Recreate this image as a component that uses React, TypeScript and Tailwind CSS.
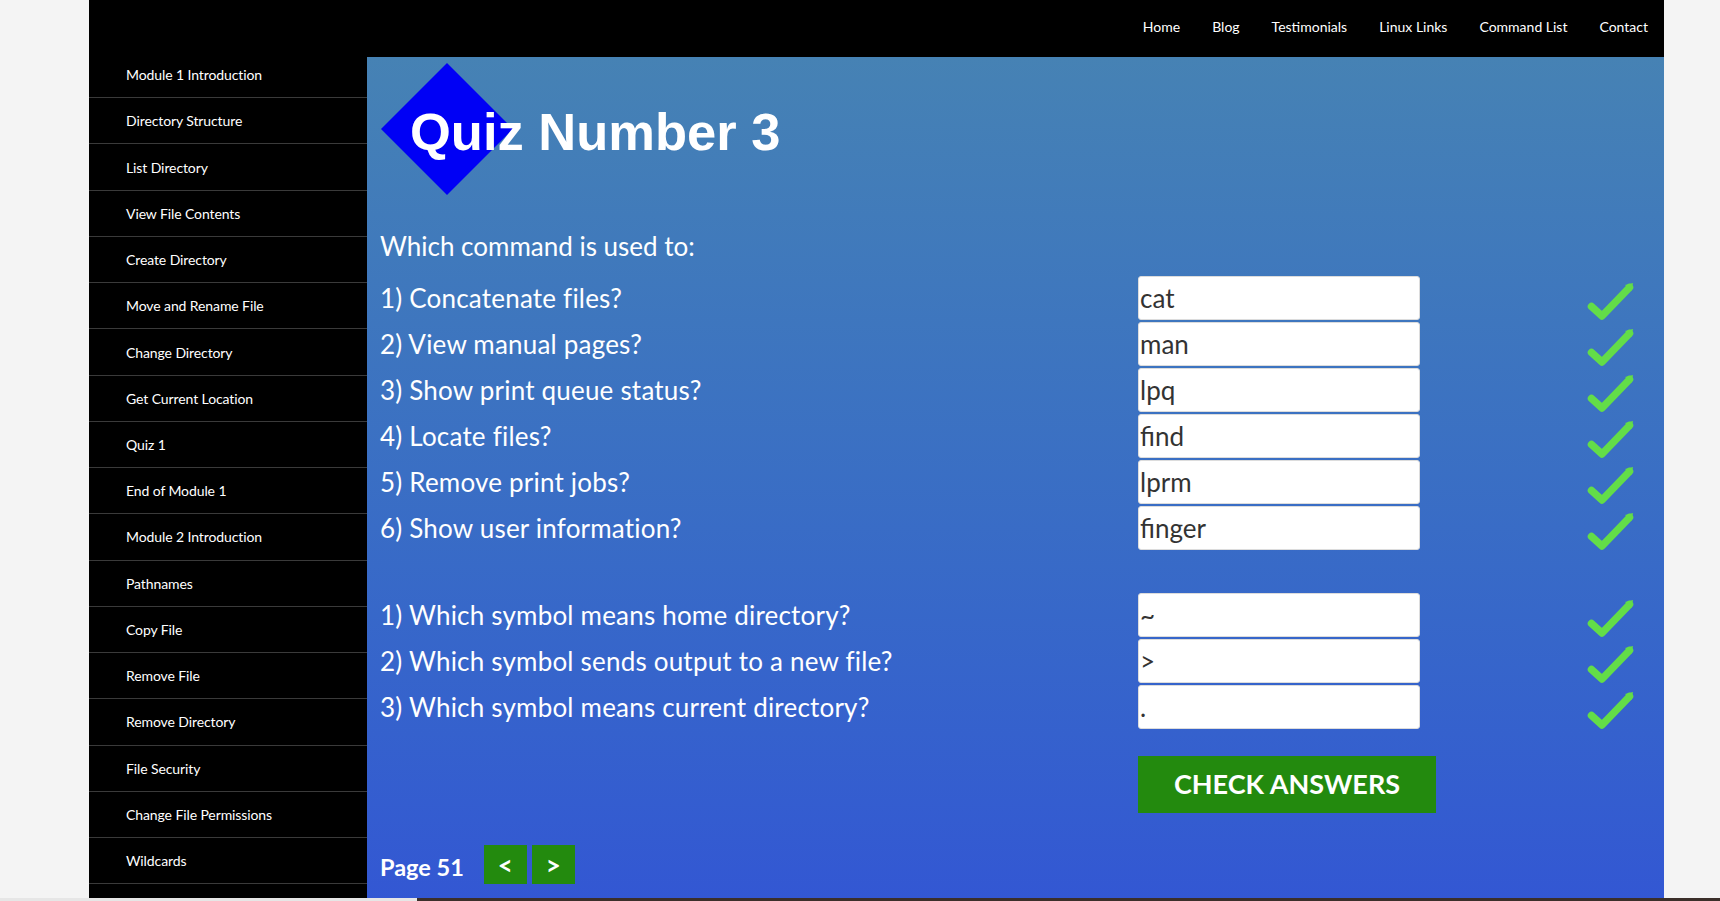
import React from "react";

const sideItems = [
  "Module 1 Introduction",
  "Directory Structure",
  "List Directory",
  "View File Contents",
  "Create Directory",
  "Move and Rename File",
  "Change Directory",
  "Get Current Location",
  "Quiz 1",
  "End of Module 1",
  "Module 2 Introduction",
  "Pathnames",
  "Copy File",
  "Remove File",
  "Remove Directory",
  "File Security",
  "Change File Permissions",
  "Wildcards",
];

const navItems = ["Home", "Blog", "Testimonials", "Linux Links", "Command List", "Contact"];

const group1 = [
  ["1) Concatenate files?", "cat"],
  ["2) View manual pages?", "man"],
  ["3) Show print queue status?", "lpq"],
  ["4) Locate files?", "find"],
  ["5) Remove print jobs?", "lprm"],
  ["6) Show user information?", "finger"],
];

const group2 = [
  ["1) Which symbol means home directory?", "~"],
  ["2) Which symbol sends output to a new file?", ">"],
  ["3) Which symbol means current directory?", "."],
];

function Check() {
  return (
    <svg width="50" height="40" viewBox="0 0 50 40" className="block">
      <path
        d="M6.5 25.5 L17 35 L44.5 6.5"
        stroke="#63dd48"
        strokeWidth="7.5"
        fill="none"
        strokeLinecap="round"
        strokeLinejoin="round"
      />
      <path d="M40 4 L48 2 L46.5 10 Z" fill="#63dd48" />
    </svg>
  );
}

function Row({ q, a }: { q: string; a: string }) {
  return (
    <div className="grid grid-cols-[758px_282px_auto] h-[46px] items-start">
      <div className="text-white text-[26px] leading-[44px] whitespace-nowrap tracking-[0.2px]">{q}</div>
      <input
        readOnly
        value={a}
        className="h-[44px] w-[282px] bg-white rounded-[3px] border border-[#dcdcdc] pl-[1px] text-[26px] text-[#333] outline-none font-[Lato,sans-serif]"
      />
      <div className="pl-[165px] pt-[5px]">
        <Check />
      </div>
    </div>
  );
}

export default function App() {
  return (
    <div className="relative w-[1720px] h-[901px] overflow-hidden bg-[#f4f4f4] flex font-[Lato,sans-serif]">
      <div className="w-[89px] shrink-0" />
      <div className="w-[1575px] shrink-0 flex">
        {/* Sidebar */}
        <div className="w-[278px] shrink-0 bg-black pt-[52px] overflow-hidden">
          {sideItems.map((s) => (
            <div
              key={s}
              className="h-[46.24px] border-b border-[#3a3a3a] flex items-center pl-[37px] text-white text-[14px] tracking-[-0.1px]"
            >
              {s}
            </div>
          ))}
        </div>
        {/* Main column */}
        <div className="flex-1 flex flex-col">
          <div className="h-[57px] bg-black flex justify-end items-center pb-[5px]">
            {navItems.map((n) => (
              <span key={n} className="px-4 text-white text-[14px]">
                {n}
              </span>
            ))}
          </div>
          <div className="flex-1 bg-gradient-to-b from-[#4682b4] to-[#3357d3] pl-[13px] flex flex-col">
            {/* Title */}
            <div className="relative h-[166px]">
              <svg
                width="132"
                height="132"
                viewBox="0 0 132 132"
                className="absolute left-[1px] top-[6px]"
              >
                <polygon points="66,0 132,66 66,132 0,66" fill="#0000f5" />
              </svg>
              <div className="relative pt-[49px] pl-[30px] text-white font-bold text-[52.5px] leading-none font-['Liberation_Sans',Arial,sans-serif] whitespace-nowrap">
                Quiz Number 3
              </div>
            </div>
            <div className="text-white text-[26px] leading-[46px] h-[46px]">Which command is used to:</div>
            <div className="mt-[7px]">
              {group1.map(([q, a]) => (
                <Row key={q} q={q} a={a} />
              ))}
            </div>
            <div className="mt-[41px]">
              {group2.map(([q, a]) => (
                <Row key={q} q={q} a={a} />
              ))}
            </div>
            <div className="mt-[25px] pl-[758px]">
              <button className="w-[298px] h-[57px] bg-[#238a0e] text-white font-bold text-[27px] flex items-center justify-center">
                CHECK ANSWERS
              </button>
            </div>
            <div className="mt-[32px] flex items-center h-[39px]">
              <span className="text-white font-bold text-[23.5px] mt-[6px]">Page 51</span>
              <div className="ml-[20px] flex gap-[5px]">
                <button className="w-[43px] h-[39px] bg-[#238a0e] text-white font-bold text-[26px] leading-none flex items-center justify-center">
                  &lt;
                </button>
                <button className="w-[43px] h-[39px] bg-[#238a0e] text-white font-bold text-[26px] leading-none flex items-center justify-center">
                  &gt;
                </button>
              </div>
            </div>
          </div>
        </div>
      </div>
      {/* bottom strip */}
      <div className="absolute bottom-0 left-0 right-0 h-[3px] flex">
        <div className="w-[417px] bg-[#e6e6e6]" />
        <div className="flex-1 bg-[#3b2f2a]" />
      </div>
    </div>
  );
}
